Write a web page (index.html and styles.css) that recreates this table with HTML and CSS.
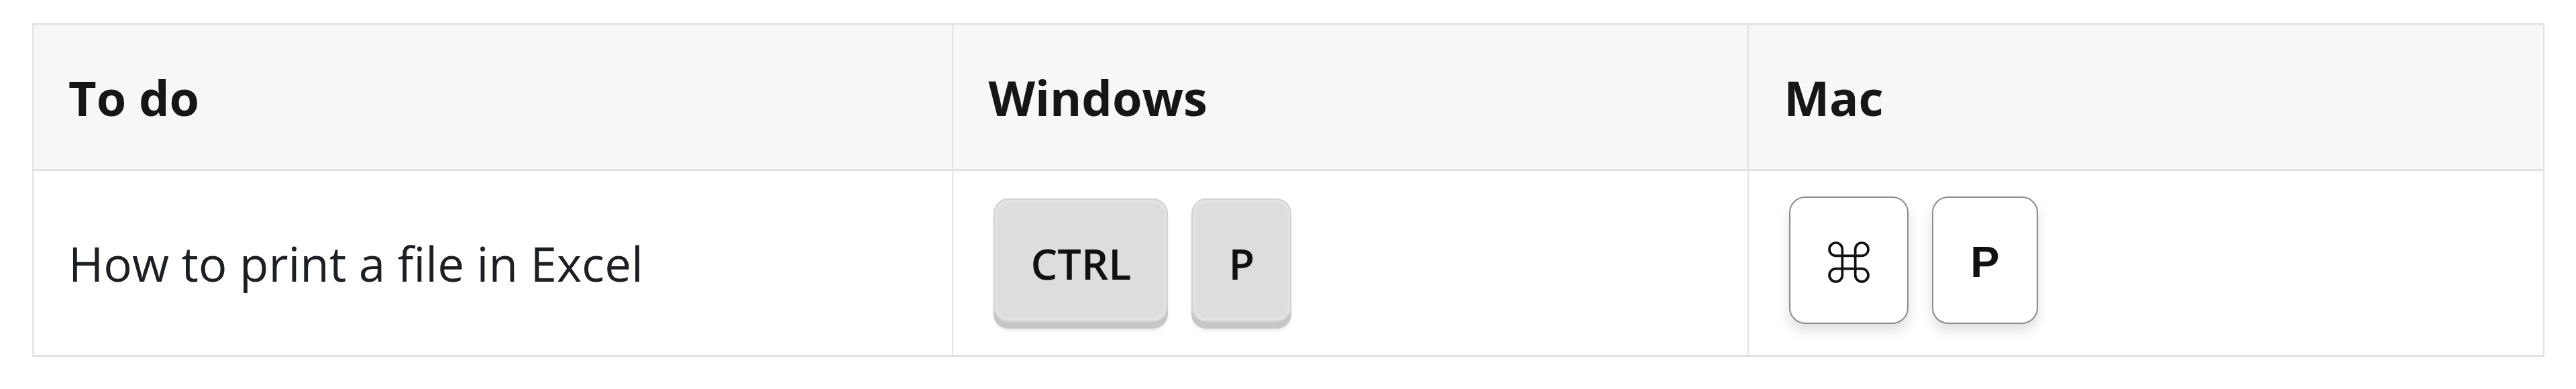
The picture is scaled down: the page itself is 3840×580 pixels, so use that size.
FILE: index.html
```html
<!DOCTYPE html>
<html lang="en">
<head>
    <meta charset="UTF-8">
    <meta name="viewport" content="width=device-width, initial-scale=1.0">
    <title>Print shortcut</title>
    <link rel="stylesheet" href="styles.css">
</head>
<body>
    <table class="shortcuts">
        <colgroup>
            <col class="col-task">
            <col class="col-os">
            <col class="col-os">
        </colgroup>
        <thead>
            <tr>
                <th>To do</th>
                <th>Windows</th>
                <th>Mac</th>
            </tr>
        </thead>
        <tbody>
            <tr>
                <td>How to print a file in Excel</td>
                <td>
                    <div class="keys">
                        <kbd class="key key-win">CTRL</kbd>
                        <kbd class="key key-win">P</kbd>
                    </div>
                </td>
                <td>
                    <div class="keys">
                        <kbd class="key key-mac key-cmd" title="Command">
                            <svg class="cmd-icon" viewBox="3 3 18 18" fill="none" stroke="#111" stroke-width="1.15">
                                <path d="M15 6v12a3 3 0 1 0 3-3H6a3 3 0 1 0 3 3V6a3 3 0 1 0-3 3h12a3 3 0 1 0-3-3"/>
                            </svg>
                        </kbd>
                        <kbd class="key key-mac">P</kbd>
                    </div>
                </td>
            </tr>
        </tbody>
    </table>
</body>
</html>
```

FILE: styles.css
```css
body {
    margin: 34px 47px 0 48px;
    background: #fff;
    font-family: "Open Sans", "Noto Sans", sans-serif;
    color: #1c1f23;
}
.shortcuts {
    width: 100%;
    border-collapse: collapse;
    table-layout: fixed;
}
.col-task {
    width: 36.64%;
}
.col-os {
    width: 31.68%;
}
.shortcuts th,
.shortcuts td {
    border: 2px solid #e2e2e2;
    border-top-width: 3px;
    border-bottom-width: 3px;
    padding: 0 52px;
    text-align: left;
    vertical-align: middle;
}
.shortcuts th {
    background: #f7f7f7;
    height: 215px;
    font-size: 72px;
    font-weight: 700;
    color: #161616;
}
.shortcuts td {
    height: 274px;
    font-size: 71px;
    font-weight: 400;
}
.keys {
    display: flex;
    gap: 35px;
    padding-left: 8px;
    padding-bottom: 8px;
}
.key {
    display: inline-flex;
    align-items: center;
    justify-content: center;
    box-sizing: border-box;
    color: #111;
}
.key-win {
    height: 184px;
    padding: 8px 53px 0;
    font-family: "Open Sans", sans-serif;
    font-size: 63px;
    font-weight: 600;
    background: #dddddd;
    border: 2px solid #d2d2d2;
    border-radius: 22px;
    box-shadow: inset 0 0 0 4px #e3e3e3, 0 10px 0 #c6c6c6, 0 13px 4px rgba(0, 0, 0, 0.08);
}
.key-mac {
    height: 190px;
    padding: 4px 55px 0;
    font-family: "Liberation Sans", Arial, sans-serif;
    font-size: 65px;
    font-weight: 700;
    background: #fff;
    border: 2px solid #8c8c8c;
    border-radius: 24px;
    box-shadow: 0 10px 18px rgba(0, 0, 0, 0.13);
}
.key-cmd {
    width: 178px;
    padding: 6px 0 0;
}
.cmd-icon {
    width: 60px;
    height: 58px;
    overflow: visible;
}
```
